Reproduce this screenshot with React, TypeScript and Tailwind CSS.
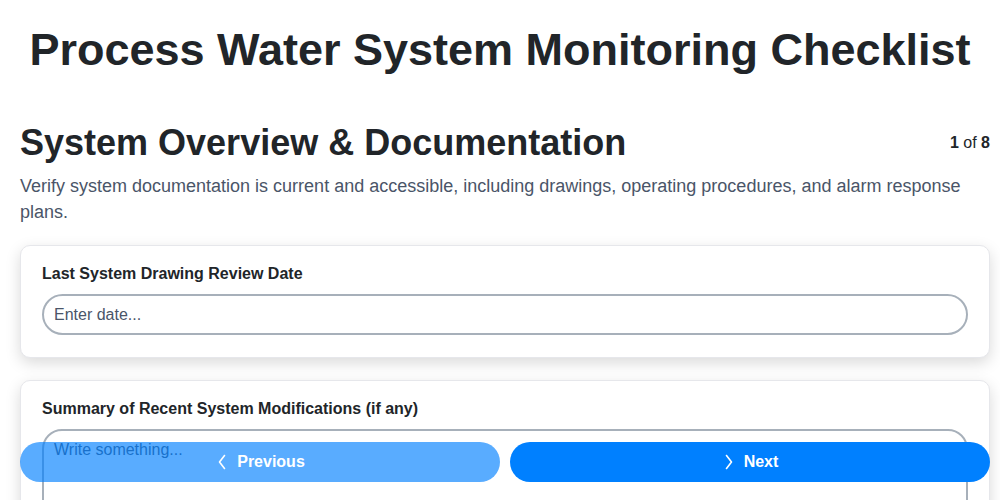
import React from "react";

function Chevron({ dir }: { dir: "left" | "right" }) {
  return (
    <svg width="14" height="16" viewBox="0 0 14 16" fill="none" stroke="currentColor" strokeWidth="1.6" strokeLinecap="round" strokeLinejoin="round">
      {dir === "left" ? <path d="M9.5 1.5 L4.5 8 L9.5 14.5" /> : <path d="M4.5 1.5 L9.5 8 L4.5 14.5" />}
    </svg>
  );
}

export default function App() {
  return (
    <div className="min-h-[700px] bg-white pb-[100px] text-[#212529] [font-family:'Liberation_Sans',Arial,sans-serif]">
      <h1 className="pt-[23px] text-center text-[45px] font-bold leading-[54px]">
        Process Water System Monitoring Checklist
      </h1>
      <div className="pl-5 pr-[10px]">
        <div className="mt-[44px] flex items-center justify-between">
          <h2 className="text-[36px] font-bold leading-[43px]">System Overview &amp; Documentation</h2>
          <div className="text-base">
            <span className="font-bold">1</span> of <span className="font-bold">8</span>
          </div>
        </div>
        <p className="mt-[9px] text-lg leading-[26px] text-[#4a5568]">
          Verify system documentation is current and accessible, including drawings, operating procedures, and alarm response plans.
        </p>
        <div className="mt-5 flex flex-col gap-[22px]">
          <div className="rounded-[10px] border border-[#e6e7eb] bg-white px-[21px] pb-[22px] pt-4 shadow-[0_5px_15px_rgba(0,0,0,0.15)]">
            <div className="text-base font-bold leading-6">Last System Drawing Review Date</div>
            <input
              className="mt-2 h-[41px] w-full rounded-full border-2 border-[#a7b0ba] px-[10px] text-base text-[#212529] outline-none placeholder:text-[#4a5568]"
              placeholder="Enter date..."
            />
          </div>
          <div className="rounded-[10px] border border-[#e6e7eb] bg-white px-[21px] pb-[22px] pt-4 shadow-[0_5px_15px_rgba(0,0,0,0.15)]">
            <div className="text-base font-bold leading-6">Summary of Recent System Modifications (if any)</div>
            <textarea
              className="mt-2 block h-[120px] w-full resize-none rounded-[20px] border-2 border-[#a7b0ba] px-[10px] pt-[7px] text-base text-[#212529] outline-none placeholder:text-[#4a5568]"
              placeholder="Write something..."
            />
          </div>
        </div>
      </div>
      <div className="fixed bottom-[18px] left-5 right-[10px] flex gap-[10px]">
        <button className="flex h-10 flex-1 items-center justify-center gap-[8px] rounded-full bg-[#0080ff] text-base font-bold text-white opacity-65">
          <Chevron dir="left" />
          Previous
        </button>
        <button className="flex h-10 flex-1 items-center justify-center gap-[8px] rounded-full bg-[#0080ff] text-base font-bold text-white">
          <Chevron dir="right" />
          Next
        </button>
      </div>
    </div>
  );
}
